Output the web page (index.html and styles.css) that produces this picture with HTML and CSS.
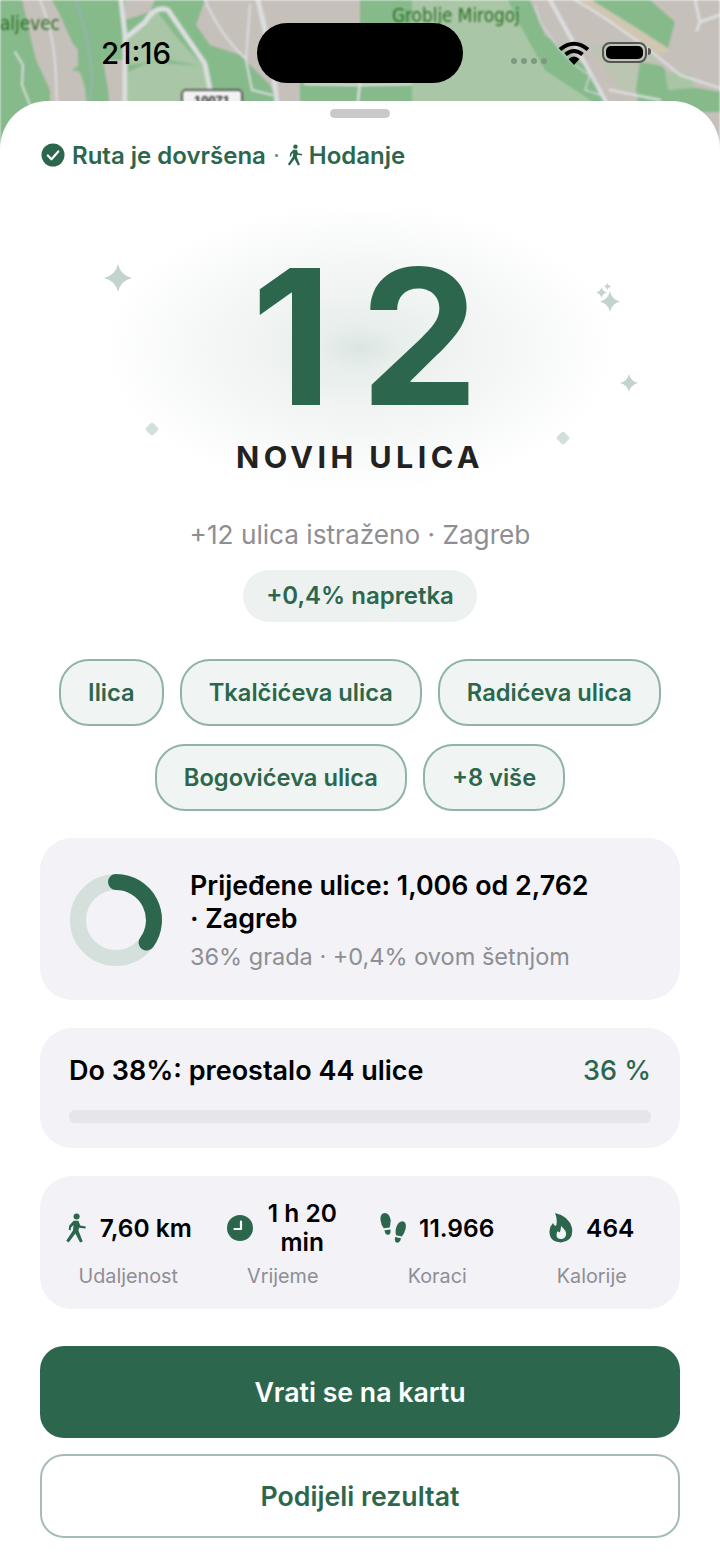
FILE: index.html
```html
<!DOCTYPE html>
<html lang="hr">
  <head>
    <meta charset="UTF-8" />
    <meta name="viewport" content="width=device-width, initial-scale=1.0" />
    <title>Ruta je dovršena</title>
    <link rel="stylesheet" href="styles.css">
  </head>
  <body>
    <div class="map-header">
      <svg class="map" viewBox="0 0 720 150" width="720" height="150">
        <rect width="720" height="150" fill="#86ba8b" />
        <!-- built up areas -->
        <polygon fill="#c6c0bb" points="22,0 52,0 60,15 72,42 78,50 78,66 72,70 80,72 85,88 90,130 50,130 50,90 36,60 30,35" />
        <polygon fill="#c6c0bb" points="103,60 125,60 125,130 112,130 108,90" />
        <polygon fill="#c6c0bb" points="125,0 155,0 150,12 125,20" />
        <polygon fill="#c6c0bb" points="205,0 360,0 360,130 290,130 270,85 240,55 210,45 196,25" />
        <polygon fill="#86ba8b" points="300,82 420,82 420,130 300,130" />
        <polygon fill="#c6c0bb" points="530,0 720,0 720,150 630,150 590,70 545,35" />
        <polygon fill="#bcc4b2" points="590,45 650,40 660,70 640,100 620,90" />
        <polygon fill="#d0c6b2" points="572,0 592,0 640,28 670,50 660,55 620,28" />
        <polygon fill="#86ba8b" points="592,0 650,0 675,22 668,48 640,30" />
        <polygon fill="#86ba8b" points="640,62 662,66 675,84 720,92 720,112 640,112 636,90" />
        <polygon fill="#a8c6a5" points="665,72 690,74 695,88 668,90" />
        <!-- cemetery and park -->
        <polygon fill="#a9c6a6" points="412,0 508,0 520,25 545,70 590,100 605,130 412,130" />
        <polygon fill="#a9c6a6" points="128,35 158,12 175,35 205,68 212,95 212,130 128,130" />
        <polygon fill="#86ba8b" points="128,65 170,60 200,66 150,62 128,72" />
        <!-- roads -->
        <g fill="none" stroke="#dcdedf" stroke-linejoin="round" stroke-linecap="round">
          <path stroke-width="5" d="M121 0 L125 35 L125 130" />
          <path stroke-width="5" d="M128 36 L145 22 Q155 5 168 10 L205 64 L212 100" />
          <path stroke-width="2" d="M40 0 Q55 35 56 80 L58 130" />
          <path stroke-width="2" d="M205 0 Q220 35 245 58" />
          <path stroke-width="5" d="M258 0 L272 60 L280 130" />
          <path stroke-width="2" d="M250 5 L246 60 L252 90 L272 95" />
          <path stroke-width="2" d="M15 52 L23 65 L22 85 L30 105" />
          <path stroke-width="2.500" d="M305 84 L360 85 L411 84 M360 82 L355 130" />
          <path stroke-width="4" d="M550 0 L605 100 L622 130" />
          <path stroke-width="2.500" d="M575 0 Q620 25 680 75 L720 88" />
          <path stroke-width="2.500" d="M610 90 L660 100" />
          <path stroke-width="3" d="M695 0 L700 22 L720 15 M700 22 L697 30" />
        </g>
        <path fill="none" stroke="#9bb3bb" stroke-width="1.500" d="M76 0 Q90 40 92 80 L90 101" />
        <path fill="none" stroke="#cfd6dc" stroke-width="1.500" d="M535 5 L540 22 L560 50 L575 65 L593 78 M590 75 L585 90 L600 95 L592 75" />
        <text class="map-label" x="392" y="22">Groblje Mirogoj</text>
        <text class="map-label" x="0" y="30">aljevec</text>
        <rect x="182" y="90" width="60" height="30" rx="4" fill="#f2f2f2" stroke="#333" stroke-width="1.500" />
        <text class="road-no" x="212" y="105">10071</text>
      </svg>
      <div class="status-bar">
        <span class="clock">21:16</span>
        <div class="island"></div>
        <div class="status-icons">
          <span class="dots"><i></i><i></i><i></i><i></i></span>
          <svg width="32" height="24" viewBox="0 0 32 24">
            <path fill="none" stroke="#000" stroke-width="4" d="M2 8.500 Q16 -3 30 8.500 M7.500 13.500 Q16 6.500 24.500 13.500" />
            <path d="M10.500 18 Q16 13 21.500 18 L16 24 Z" />
          </svg>
          <span class="battery"><b></b></span>
        </div>
      </div>
    </div>

    <main class="sheet">
      <div class="handle"></div>
      <div class="route-done">
        <svg width="24" height="24" viewBox="0 0 24 24">
          <circle cx="12" cy="12" r="11.500" fill="#2c674d" />
          <path d="M6.800 12.500 L10.500 16.300 L17.300 8.500" fill="none" stroke="#fff" stroke-width="2.200" stroke-linecap="round" stroke-linejoin="round" />
        </svg>
        <span>Ruta je dovršena</span>
        <span class="sep">·</span>
        <svg class="walk-small" width="16" height="22" viewBox="0 0 18 24">
          <use href="#walk" />
        </svg>
        <span>Hodanje</span>
      </div>

      <section class="hero">
        <div class="glow"></div>
        <svg class="spark s1" viewBox="0 0 24 24" preserveAspectRatio="none"><use href="#spark" /></svg>
        <svg class="spark s2" viewBox="0 0 24 24" preserveAspectRatio="none"><use href="#spark" /></svg>
        <svg class="spark s3" viewBox="0 0 24 24" preserveAspectRatio="none"><use href="#spark" /></svg>
        <svg class="spark s4" viewBox="0 0 24 24" preserveAspectRatio="none"><use href="#spark" /></svg>
        <svg class="spark s5" viewBox="0 0 24 24" preserveAspectRatio="none"><use href="#spark" /></svg>
        <i class="diamond d1"></i>
        <i class="diamond d2"></i>
        <div class="big-number">12</div>
        <div class="big-label">NOVIH ULICA</div>
      </section>

      <p class="explored">+12 ulica istraženo · Zagreb</p>
      <div class="progress-pill">+0,4% napretka</div>

      <div class="chips">
        <span class="chip">Ilica</span>
        <span class="chip">Tkalčićeva ulica</span>
        <span class="chip">Radićeva ulica</span>
        <span class="chip">Bogovićeva ulica</span>
        <span class="chip">+8 više</span>
      </div>

      <section class="card city-card">
        <svg class="ring" width="92" height="92" viewBox="0 0 92 92">
          <circle cx="46" cy="46" r="38" fill="none" stroke="#d5e0dd" stroke-width="16" />
          <path d="M46 8 A38 38 0 0 1 76.600 68.500" fill="none" stroke="#2c674d" stroke-width="16" stroke-linecap="round" />
        </svg>
        <div class="city-text">
          <h3>Prijeđene ulice: 1,006 od 2,762 · Zagreb</h3>
          <p>36% grada · +0,4% ovom šetnjom</p>
        </div>
      </section>

      <section class="card goal-card">
        <div class="goal-row">
          <span>Do 38%: preostalo 44 ulice</span>
          <span class="goal-pct">36 %</span>
        </div>
        <div class="bar"></div>
      </section>

      <section class="card stats">
        <div class="stat">
          <div class="stat-value">
            <svg width="22" height="30" viewBox="0 0 18 24"><use href="#walk" /></svg>
            <span>7,60 km</span>
          </div>
          <div class="stat-label">Udaljenost</div>
        </div>
        <div class="stat">
          <div class="stat-value">
            <svg width="26" height="26" viewBox="0 0 26 26">
              <circle cx="13" cy="13" r="13" fill="#2c674d" />
              <path d="M14 6.500 V14 H7.500" fill="none" stroke="#fff" stroke-width="2.200" stroke-linecap="round" stroke-linejoin="round" />
            </svg>
            <span class="wrap">1 h 20 min</span>
          </div>
          <div class="stat-label">Vrijeme</div>
        </div>
        <div class="stat">
          <div class="stat-value">
            <svg width="26" height="30" viewBox="0 0 26 30" fill="#2c674d">
              <g transform="rotate(-8 6 10)">
                <path d="M1 7 Q1 0 6 0 Q11 1 11 8 Q10 13 9 15 L3 15 Q1 11 1 7 Z" />
                <path d="M3.500 17 L9.500 17 Q9.500 22 6.500 22 Q3.500 22 3.500 17 Z" />
              </g>
              <g transform="rotate(12 20 18)">
                <path d="M25 15 Q25 8 20.500 8 Q16 9 15.500 16 Q15.500 20 17 23 L23 23 Q25 19 25 15 Z" />
                <path d="M16.500 25 L22.500 25 Q22.500 30 19.500 30 Q16.500 30 16.500 25 Z" />
              </g>
            </svg>
            <span>11.966</span>
          </div>
          <div class="stat-label">Koraci</div>
        </div>
        <div class="stat">
          <div class="stat-value">
            <svg width="24" height="30" viewBox="0 0 24 30">
              <path fill="#2c674d" d="M6 0 Q20 3 23 15 Q25 28 12 29.500 Q0 29 0.500 18 Q1 13 4 10 Q5 13 7 13 Q9 7 6 0 Z" />
              <path fill="#f2f2f7" d="M12 13 Q18 18 17 22 Q16 26 12 26 Q7.500 26 7.500 22 Q7.500 19 9 18 Q10 20 11 19 Q12 16 12 13 Z" />
            </svg>
            <span>464</span>
          </div>
          <div class="stat-label">Kalorije</div>
        </div>
      </section>

      <button class="btn btn-primary">Vrati se na kartu</button>
      <button class="btn btn-outline">Podijeli rezultat</button>
    </main>

    <svg class="defs" width="0" height="0">
      <defs>
        <g id="walk" fill="#2c674d">
          <circle cx="9.500" cy="2.600" r="2.500" />
          <path d="M7 6 L11 6 L12.500 10 L17 10.800 L16.800 12.500 L11.500 11.800 L11 14 L14.500 23 L12.300 23.800 L8.500 16.500 L3 23.800 L1 22.500 L6.500 14 L7 9.500 L5 11.500 L4.500 14 L3 13.500 L3.500 10 Z" />
        </g>
        <path id="spark" d="M12 0 Q14 9.500 24 12 Q14 14.500 12 24 Q10 14.500 0 12 Q10 9.500 12 0 Z" />
      </defs>
    </svg>
  </body>
</html>
```

FILE: styles.css
```css
* {
  box-sizing: border-box;
}

body {
  margin: 0;
  background: #fff;
  font-family: Inter, "Noto Sans", sans-serif;
  color: #000;
}

.defs {
  position: absolute;
}

.map-header {
  position: relative;
  height: 101px;
}

.map {
  position: absolute;
  top: 0;
  left: 0;
  filter: blur(0.8px);
}

.map-label {
  font-family: "DejaVu Sans", sans-serif;
  font-size: 18.800px;
  font-stretch: condensed;
  fill: #2c6e22;
}

.road-no {
  font-family: "Liberation Sans", sans-serif;
  font-size: 13px;
  font-weight: 700;
  fill: #222;
  text-anchor: middle;
}

.status-bar {
  position: relative;
  display: flex;
  align-items: flex-start;
  padding: 23px 0 0 101px;
}

.clock {
  width: 156px;
  font-size: 29.500px;
  line-height: 60px;
  font-weight: 500;
}

.island {
  width: 206px;
  height: 60px;
  border-radius: 30px;
  background: #000;
}

.status-icons {
  display: flex;
  align-items: center;
  padding: 18px 0 0 48px;
}

.dots {
  display: flex;
  gap: 4px;
  margin: 16px 11px 0 0;
}

.dots i {
  width: 6px;
  height: 6px;
  border-radius: 50%;
  background: #7d9a80;
}

.battery {
  display: block;
  position: relative;
  width: 45px;
  height: 21px;
  margin: -1px 0 0 12px;
  padding: 2px;
  border: 2px solid #555;
  border-radius: 8px;
}

.battery b {
  display: block;
  height: 100%;
  border-radius: 5px;
  background: #000;
}

.battery::after {
  content: "";
  position: absolute;
  top: 4px;
  right: -6px;
  width: 3px;
  height: 7px;
  border-radius: 0 3px 3px 0;
  background: #555;
}

.sheet {
  position: relative;
  display: flex;
  flex-direction: column;
  align-items: center;
  height: 1463px;
  padding: 8px 40px 0;
  background: #fff;
  border-radius: 48px 48px 0 0;
}

.handle {
  width: 60px;
  height: 9px;
  border-radius: 5px;
  background: #c9c9c9;
}

.route-done {
  display: flex;
  align-self: stretch;
  align-items: center;
  gap: 7px;
  margin-top: 21px;
  height: 32px;
  padding-left: 1px;
  font-size: 24px;
  font-weight: 600;
  color: #2c674d;
}

.route-done .sep {
  font-weight: 400;
  color: #6f8f82;
}

.walk-small {
  margin-right: -1px;
}

.hero {
  position: relative;
  align-self: stretch;
  height: 327px;
  text-align: center;
}

.glow {
  position: absolute;
  top: 32px;
  left: 65px;
  width: 510px;
  height: 290px;
  border-radius: 50%;
  background: radial-gradient(closest-side, #dbe6e1 0%, #e7eeeb 15%, #f1f4f3 42%, #f8f9f9 72%, #fff 100%);
}

.spark {
  position: absolute;
  fill: #c3d3cd;
}

.s1 { left: 64px; top: 93px; width: 28px; height: 28px; }
.s2 { left: 560px; top: 120px; width: 20px; height: 21px; }
.s3 { left: 556px; top: 116px; width: 11px; height: 11px; }
.s4 { left: 564px; top: 112px; width: 7px; height: 7px; }
.s5 { left: 580px; top: 203px; width: 18px; height: 18px; }

.diamond {
  position: absolute;
  width: 10px;
  height: 10px;
  border-radius: 2px;
  background: #d2dfda;
  transform: rotate(45deg);
}

.d1 { left: 107px; top: 253px; }
.d2 { left: 518px; top: 262px; }

.big-number {
  position: relative;
  padding: 66px 0 0 38px;
  font-size: 188px;
  line-height: 200px;
  font-weight: 700;
  letter-spacing: 28px;
  color: #2c674d;
}

.big-label {
  position: relative;
  font-size: 30.500px;
  line-height: 40px;
  font-weight: 700;
  letter-spacing: 4.400px;
  color: #222;
}

.explored {
  margin: 20px 0 0;
  font-size: 26.200px;
  line-height: 34px;
  color: #8e8e93;
}

.progress-pill {
  margin-top: 18px;
  padding: 0 23px;
  height: 52px;
  line-height: 52px;
  border-radius: 26px;
  background: #edf2f0;
  font-size: 24px;
  font-weight: 600;
  color: #2c674d;
}

.chips {
  display: flex;
  flex-wrap: wrap;
  justify-content: center;
  gap: 18px 16px;
  margin: 37px -10px 0;
}

.chip {
  height: 67px;
  padding: 0 27px;
  line-height: 63px;
  border: 2px solid #8fb3a5;
  border-radius: 30px;
  background: #f0f5f3;
  font-size: 23.700px;
  font-weight: 600;
  color: #2c674d;
}

.card {
  align-self: stretch;
  border-radius: 32px;
  background: #f2f2f7;
}

.city-card {
  display: flex;
  align-items: center;
  gap: 28px;
  height: 162px;
  margin-top: 27px;
  padding: 0 82px 0 30px;
}

.ring {
  flex: none;
  margin-top: 2px;
}

.city-text {
  padding-top: 4px;
}

.city-card h3 {
  margin: 0;
  font-size: 26.800px;
  line-height: 33px;
  font-weight: 600;
}

.city-card p {
  margin: 6px 0 0;
  font-size: 23.500px;
  line-height: 32px;
  color: #8e8e93;
  white-space: nowrap;
}

.goal-card {
  height: 120px;
  margin-top: 28px;
  padding: 25px 29px 0;
}

.goal-row {
  display: flex;
  justify-content: space-between;
  font-size: 27px;
  line-height: 36px;
  font-weight: 600;
}

.goal-pct {
  font-weight: 500;
  color: #2c674d;
}

.bar {
  height: 13px;
  margin-top: 21px;
  border-radius: 6px;
  background: #e5e5ea;
}

.stats {
  display: grid;
  grid-template-columns: repeat(4, 1fr);
  height: 133px;
  margin-top: 28px;
  padding: 20px 11px 0;
}

.stat {
  text-align: center;
}

.stat-value {
  display: flex;
  align-items: center;
  justify-content: center;
  gap: 13px;
  height: 64px;
  font-size: 24.500px;
  line-height: 29px;
  font-weight: 600;
}

.stat-value svg {
  flex: none;
}

.wrap {
  width: 72px;
}

.stat-label {
  margin-top: 4px;
  font-size: 19.800px;
  line-height: 24px;
  color: #8e8e93;
}

.btn {
  align-self: stretch;
  font-family: inherit;
  font-size: 26.700px;
  font-weight: 600;
}

.btn-primary {
  height: 92px;
  margin-top: 37px;
  border: none;
  border-radius: 24px;
  background: #2c674d;
  color: #fff;
}

.btn-outline {
  height: 84px;
  margin-top: 16px;
  border: 2px solid #a5bdb3;
  border-radius: 24px;
  background: #fff;
  color: #2c674d;
}
```
